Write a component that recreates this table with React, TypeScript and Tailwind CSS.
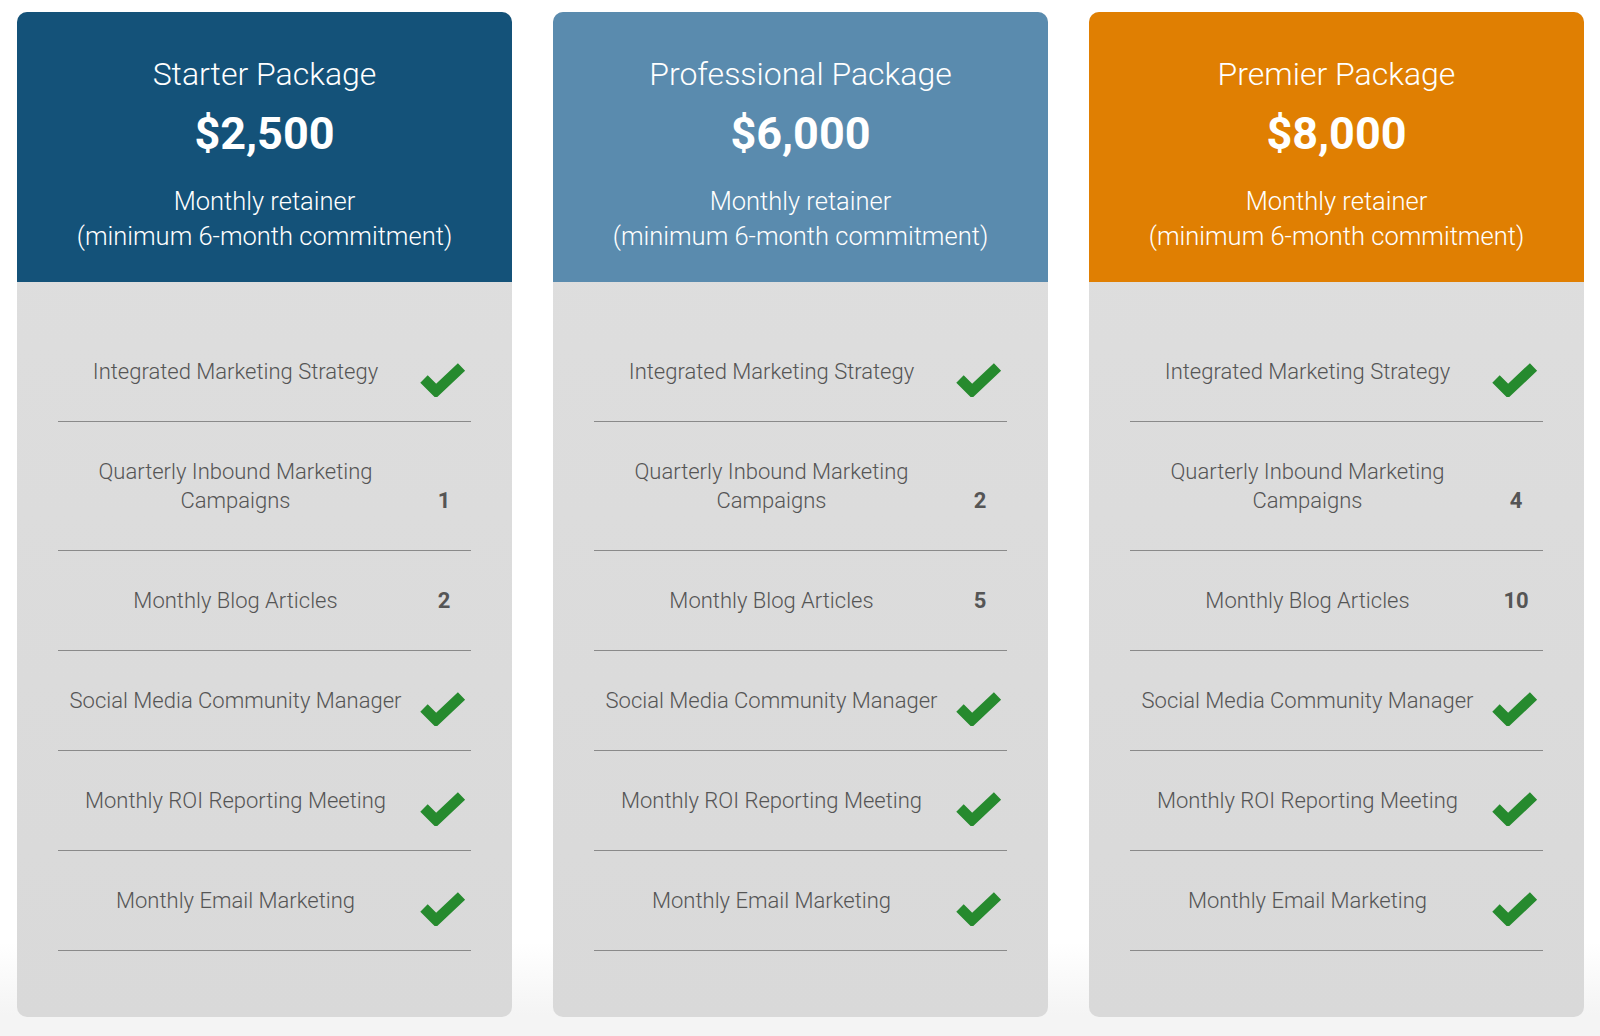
import React from "react";

type Val = "check" | string;
type Pkg = { name: string; price: string; header: string; values: Val[] };

const labels: React.ReactNode[] = [
  "Integrated Marketing Strategy",
  <>
    Quarterly Inbound Marketing
    <br />
    Campaigns
  </>,
  "Monthly Blog Articles",
  "Social Media Community Manager",
  "Monthly ROI Reporting Meeting",
  "Monthly Email Marketing",
];

const pkgs: Pkg[] = [
  { name: "Starter Package", price: "$2,500", header: "bg-[#145279]", values: ["check", "1", "2", "check", "check", "check"] },
  { name: "Professional Package", price: "$6,000", header: "bg-[#5a8bae]", values: ["check", "2", "5", "check", "check", "check"] },
  { name: "Premier Package", price: "$8,000", header: "bg-[#e07f02]", values: ["check", "4", "10", "check", "check", "check"] },
];

function Check() {
  return (
    <div className="h-[29px] flex justify-center">
      <svg width="48" height="38" viewBox="0 0 48 38" className="mt-[2px] ml-[2px] shrink-0">
        <polyline
          points="5,20 17,32 42.5,8"
          fill="none"
          stroke="#268a2e"
          strokeWidth="10.5"
          strokeLinecap="butt"
          strokeLinejoin="miter"
        />
      </svg>
    </div>
  );
}

function Card({ p }: { p: Pkg }) {
  return (
    <div className="w-[495px] h-[1005px] rounded-[10px] overflow-hidden flex flex-col bg-[linear-gradient(to_bottom,#dfdfdf,#d9d9d9)]">
      <div className={`${p.header} h-[270px] flex flex-col items-center text-white pt-[42px] font-['Roboto',sans-serif]`}>
        <div className="text-[32px] leading-[40px] font-light">{p.name}</div>
        <div className="text-[45px] leading-[52px] font-bold mt-[14px]">{p.price}</div>
        <div className="text-[25.5px] leading-[35px] font-light mt-[24px] text-center">
          Monthly retainer
          <br />
          (minimum 6-month commitment)
        </div>
      </div>
      <div className="px-[41px] pt-[40px] font-['Roboto',sans-serif] text-[#555]">
        {labels.map((l, i) => (
          <div key={i} className="flex py-[35px] border-b-[1.5px] border-[#8a8a8a]">
            <div className="flex-1 text-center text-[22px] leading-[29px] font-light">{l}</div>
            <div className="w-[58px] flex flex-col justify-end">
              {p.values[i] === "check" ? (
                <Check />
              ) : (
                <div className="text-center pl-[4px] text-[22px] leading-[29px] font-bold">{p.values[i]}</div>
              )}
            </div>
          </div>
        ))}
      </div>
    </div>
  );
}

export default function App() {
  return (
    <div className="w-[1600px] h-[1036px] overflow-hidden bg-[linear-gradient(to_bottom,#ffffff_0%,#ffffff_91%,#f4f4f4_98%,#f4f4f4_100%)] flex gap-[41px] pl-[17px] pt-[12px]">
      {pkgs.map((p) => (
        <Card key={p.name} p={p} />
      ))}
    </div>
  );
}
